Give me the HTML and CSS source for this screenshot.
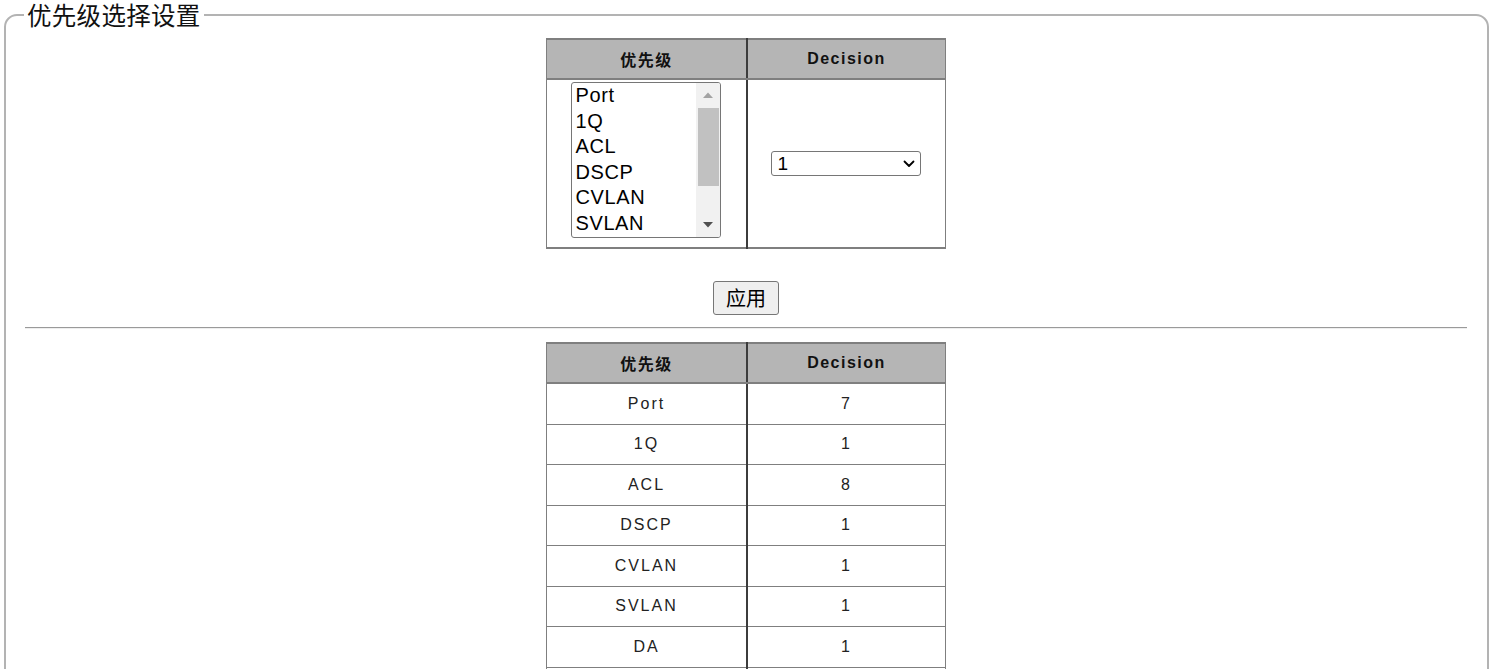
FILE: index.html
```html
<!DOCTYPE html>
<html lang="zh">
<head>
<meta charset="utf-8">
<title>优先级选择设置</title>
<link rel="stylesheet" href="styles.css">
</head>
<body>
<fieldset class="panel">
  <legend class="panel-title">优先级选择设置</legend>

  <table class="grid grid-form">
    <thead>
      <tr><th class="col-a">优先级</th><th class="col-b">Decision</th></tr>
    </thead>
    <tbody>
      <tr>
        <td class="col-a form-cell">
          <div class="listbox-wrap">
            <select class="listbox" multiple size="6">
              <option>Port</option>
              <option>1Q</option>
              <option>ACL</option>
              <option>DSCP</option>
              <option>CVLAN</option>
              <option>SVLAN</option>
              <option>DA</option>
              <option>SA</option>
            </select>
            <div class="scrollbar" aria-hidden="true">
              <div class="sb-btn">
                <svg width="10" height="6" viewBox="0 0 10 6"><path d="M0 6 L5 0.5 L10 6 Z" fill="#a3a3a3"/></svg>
              </div>
              <div class="sb-track"><div class="sb-thumb"></div></div>
              <div class="sb-btn">
                <svg width="10" height="6" viewBox="0 0 10 6"><path d="M0 0 L5 5.5 L10 0 Z" fill="#505050"/></svg>
              </div>
            </div>
          </div>
        </td>
        <td class="col-b form-cell">
          <div class="select-wrap">
            <select class="dropdown">
              <option>1</option><option>2</option><option>3</option><option>4</option>
              <option>5</option><option>6</option><option>7</option><option>8</option>
            </select>
            <svg class="chevron" width="12" height="8" viewBox="0 0 12 8" aria-hidden="true">
              <path d="M1.5 1.5 L6 6 L10.5 1.5" fill="none" stroke="#000" stroke-width="1.8" stroke-linecap="round" stroke-linejoin="round"/>
            </svg>
          </div>
        </td>
      </tr>
    </tbody>
  </table>

  <div class="actions"><button class="btn" type="button">应用</button></div>

  <hr class="divider">

  <table class="grid grid-list">
    <thead>
      <tr><th class="col-a">优先级</th><th class="col-b">Decision</th></tr>
    </thead>
    <tbody>
      <tr><td class="col-a">Port</td><td class="col-b">7</td></tr>
      <tr><td class="col-a">1Q</td><td class="col-b">1</td></tr>
      <tr><td class="col-a">ACL</td><td class="col-b">8</td></tr>
      <tr><td class="col-a">DSCP</td><td class="col-b">1</td></tr>
      <tr><td class="col-a">CVLAN</td><td class="col-b">1</td></tr>
      <tr><td class="col-a">SVLAN</td><td class="col-b">1</td></tr>
      <tr><td class="col-a">DA</td><td class="col-b">1</td></tr>
      <tr><td class="col-a">SA</td><td class="col-b">1</td></tr>
    </tbody>
  </table>
</fieldset>
</body>
</html>
```

FILE: styles.css
```css
html, body {
  margin: 0;
  padding: 0;
  background: #ffffff;
}

body {
  font-family: "Liberation Sans", Arial, "Noto Sans CJK SC", sans-serif;
  color: #000;
  overflow: hidden;
}

.panel {
  margin: 0 4px;
  padding: 0 20px 20px 19px;
  border: 2px solid #b3b3b3;
  border-radius: 13px;
  min-width: 0;
}

.panel-title {
  padding: 0 3px;
  margin-left: -1px;
  font-family: "Noto Sans CJK SC", "Noto Sans", sans-serif;
  font-size: 24.5px;
  line-height: 30px;
  letter-spacing: 0.3px;
  color: #111;
}

.grid {
  width: 400px;
  margin: 0 auto;
  border-collapse: collapse;
  table-layout: fixed;
  border-top: 2px solid #7f7f7f;
  border-left: 1px solid #7f7f7f;
  border-right: 1px solid #7f7f7f;
}

.grid-form {
  margin-top: 8px;
  border-bottom: 2px solid #7f7f7f;
}

.grid-list {
  margin-top: 13px;
}

.grid th {
  height: 38px;
  padding: 0;
  background: #b5b5b5;
  font-size: 16px;
  font-weight: bold;
  letter-spacing: 1.5px;
  border-bottom: 2px solid #7f7f7f;
  text-align: center;
  vertical-align: middle;
  color: #111;
}

.grid th.col-a,
.grid td.col-a {
  width: 199px;
  border-right: 2px solid #3c3c3c;
}

.grid td {
  padding: 0;
  height: 39.5px;
  text-align: center;
  vertical-align: middle;
  font-size: 16px;
  letter-spacing: 2px;
  color: #222;
  border-bottom: 1px solid #7f7f7f;
}

.grid td.form-cell {
  height: 167px;
  border-bottom: none;
}

.listbox-wrap {
  position: relative;
  width: 150px;
  height: 156px;
  margin: 0 auto 7px;
  left: -1px;
}

.listbox {
  display: block;
  width: 150px;
  height: 156px;
  padding: 1px 0 0 2px;
  box-sizing: border-box;
  border: 1px solid #767676;
  border-radius: 3px;
  font-family: "Liberation Sans", Arial, sans-serif;
  font-size: 20px;
  letter-spacing: 0.6px;
  color: #000;
  background: #fff;
  overflow: hidden;
}

.listbox option {
  padding: 0 2px;
  line-height: 25.5px;
  height: 25.5px;
  min-height: 25.5px;
}

.scrollbar {
  position: absolute;
  top: 1px;
  right: 1px;
  bottom: 1px;
  width: 24px;
  background: #f1f1f1;
  display: flex;
  flex-direction: column;
  border-radius: 0 2px 2px 0;
}

.sb-btn {
  height: 24px;
  display: flex;
  align-items: center;
  justify-content: center;
  flex: none;
}

.sb-track {
  flex: 1;
  padding: 0 1px 0 2px;
  display: flex;
  flex-direction: column;
}

.sb-thumb {
  height: 78px;
  margin-top: 1px;
  background: #c1c1c1;
}

.select-wrap {
  position: relative;
  width: 150px;
  margin: 0 auto;
  left: -1px;
}

.dropdown {
  display: block;
  width: 150px;
  height: 25px;
  padding: 0 0 0 6px;
  appearance: none;
  -webkit-appearance: none;
  font-family: "Liberation Sans", Arial, sans-serif;
  font-size: 19px;
  border: 1px solid #767676;
  border-radius: 3px;
  background: #fff;
  color: #000;
}

.chevron {
  position: absolute;
  right: 6px;
  top: 9px;
  pointer-events: none;
}

.actions {
  display: flex;
  justify-content: center;
  padding-top: 32px;
}

.btn {
  width: 66px;
  height: 34px;
  padding: 0;
  font-family: "Noto Sans CJK SC", sans-serif;
  font-size: 20px;
  line-height: 1;
  color: #000;
  background: #efefef;
  border: 1px solid #767676;
  border-radius: 3px;
}

.divider {
  margin: 12px 0 0;
  border: 0;
  border-top: 1px solid #9a9a9a;
  border-bottom: 1px solid #eeeeee;
  height: 0;
}
```
